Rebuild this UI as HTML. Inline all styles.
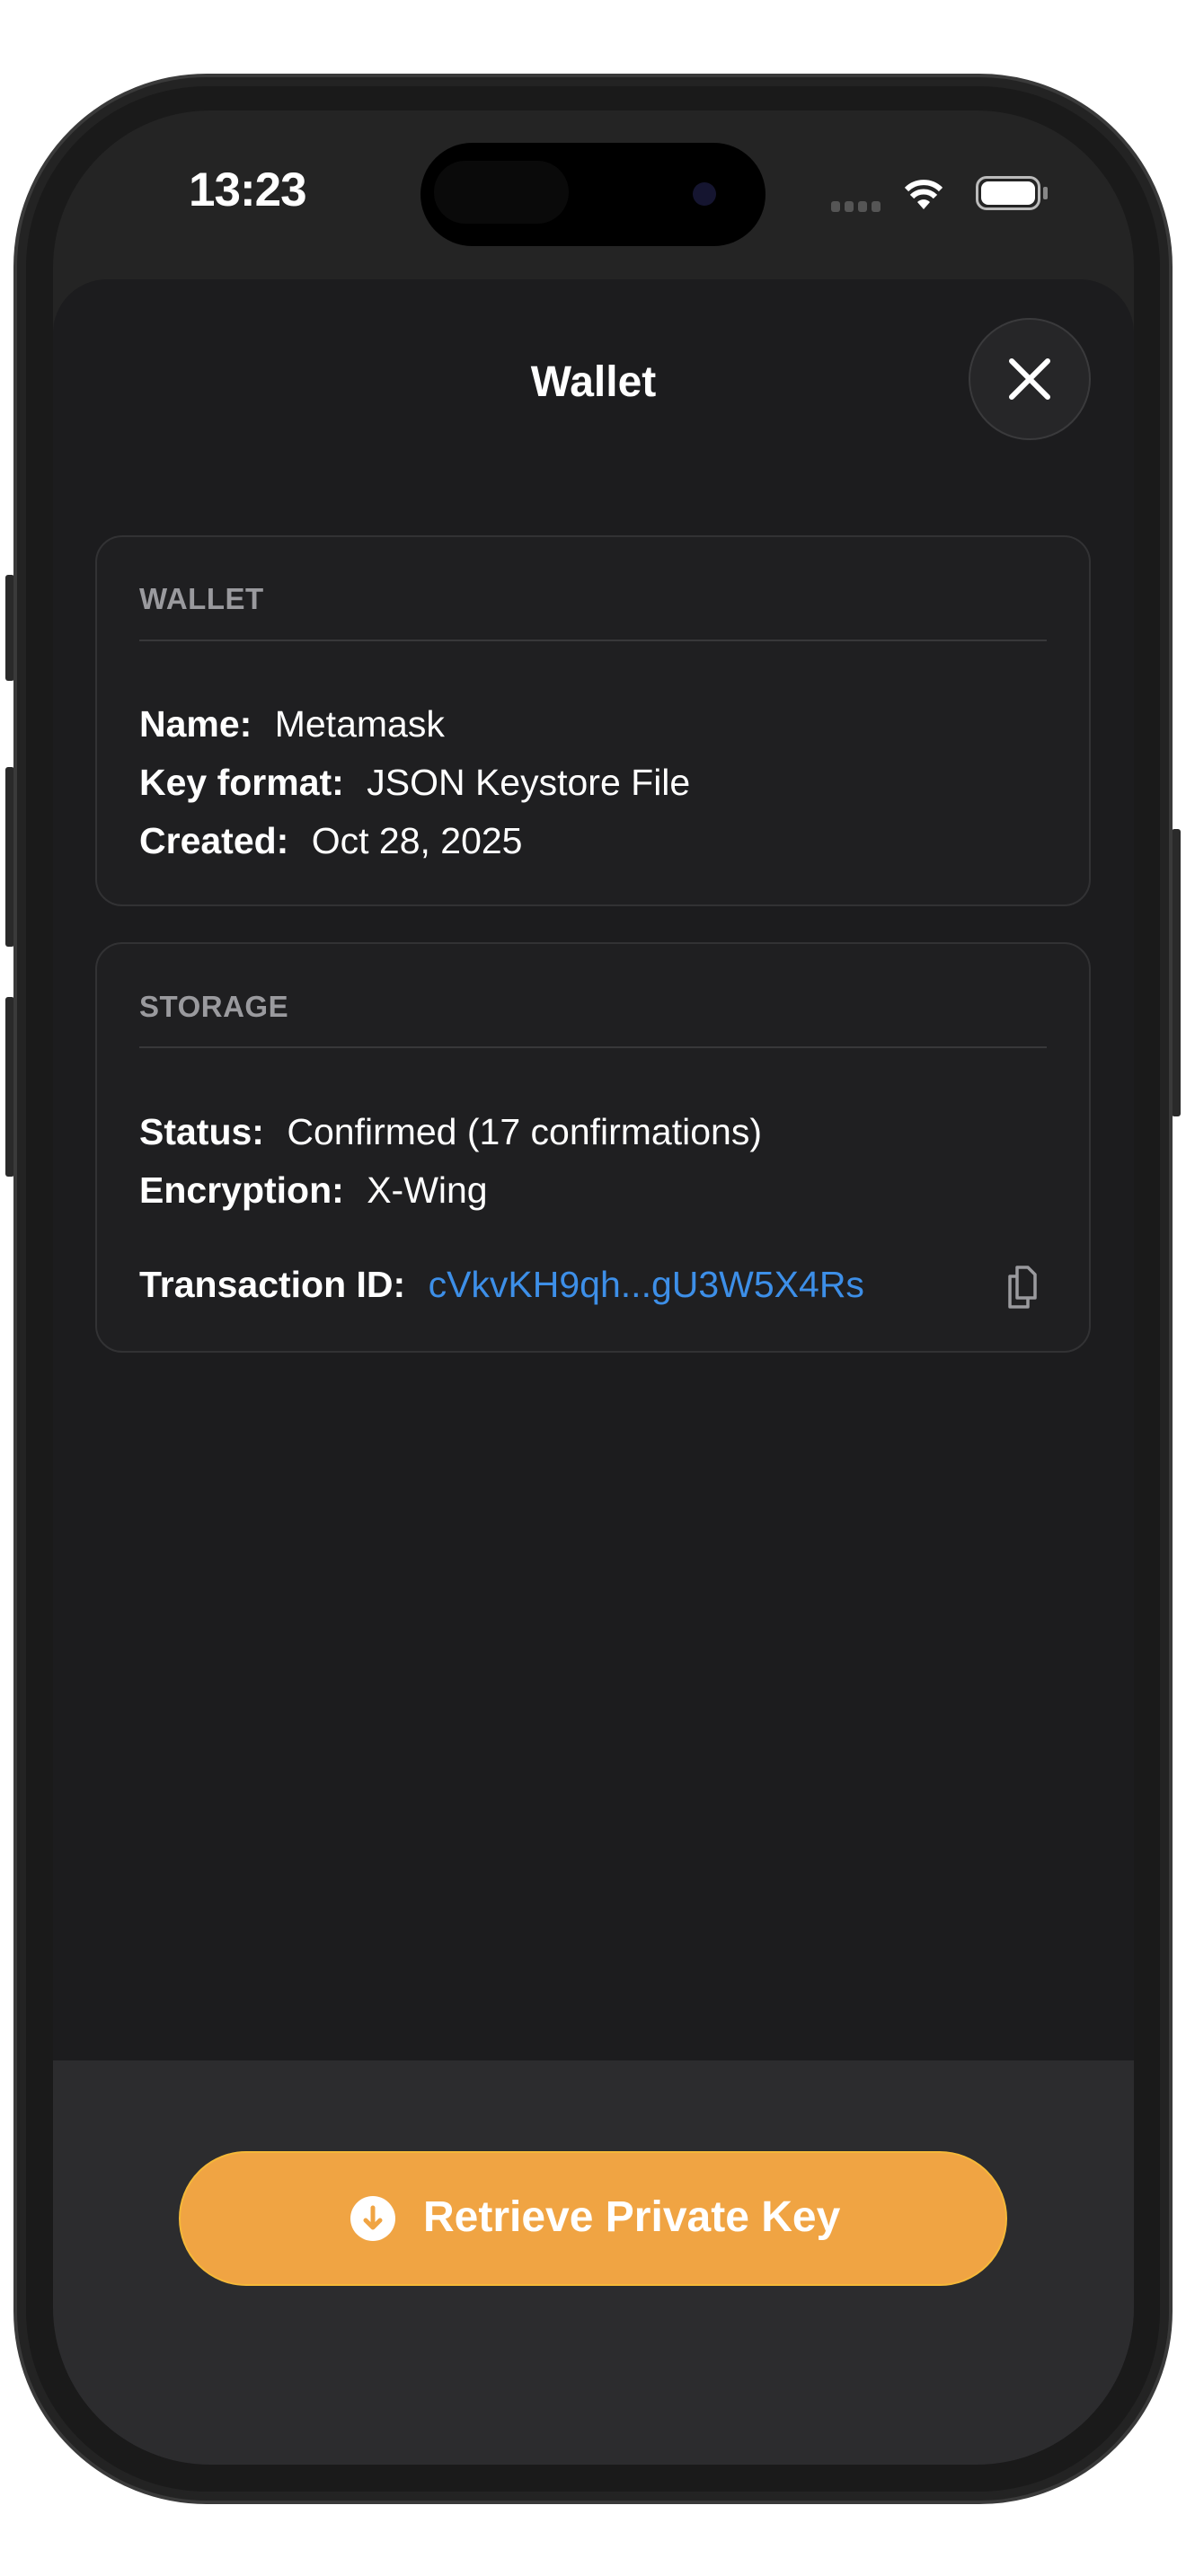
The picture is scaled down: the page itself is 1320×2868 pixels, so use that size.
<!DOCTYPE html>
<html><head><meta charset="utf-8"><style>
*{margin:0;padding:0;box-sizing:border-box}
html,body{width:1320px;height:2868px;background:#fff;overflow:hidden;font-family:"Liberation Sans",sans-serif}
.abs{position:absolute}
.phone{left:15px;top:82px;width:1290px;height:2706px;border-radius:215px;background:#1a1a1a;border:4px solid #3a3a3a;box-shadow:inset 0 0 0 10px #232323}
.screen{left:59px;top:123px;width:1203px;height:2621px;border-radius:175px;background:#242424;overflow:hidden}
.sheet{left:0;top:188px;width:1203px;height:2433px;background:#1c1c1e;border-radius:60px 60px 0 0}
.bottom{left:0;top:2171px;width:1203px;height:450px;background:#2c2c2e}
.card{background:#1f1f21;border:2px solid #323234;border-radius:30px}
.lbl{color:#9a9a9e;font-weight:bold;font-size:33px;letter-spacing:0.5px}
.div{height:2px;background:#38383a}
.row{color:#fff;font-size:41px;white-space:nowrap;line-height:46px}
.row b{font-weight:bold;margin-right:14px}
.side{background:#2a2a2a;border-radius:3px}
</style></head><body>
<div class="abs side" style="left:6px;top:640px;width:10px;height:118px"></div>
<div class="abs side" style="left:6px;top:854px;width:10px;height:200px"></div>
<div class="abs side" style="left:6px;top:1110px;width:10px;height:200px"></div>
<div class="abs side" style="left:1304px;top:923px;width:10px;height:320px"></div>
<div class="abs phone"></div>
<div class="abs screen">
  <div class="abs" style="left:151px;top:58px;color:#fff;font-size:53px;font-weight:bold;letter-spacing:-1px">13:23</div>
  <div class="abs" style="left:409px;top:36px;width:384px;height:115px;background:#000;border-radius:58px"></div>
  <div class="abs" style="left:424px;top:56px;width:150px;height:70px;background:#0a0a0a;border-radius:35px"></div>
  <div class="abs" style="left:712px;top:80px;width:26px;height:26px;background:#151530;border-radius:50%"></div>
  <div class="abs" style="left:866px;top:101px;width:60px;height:12px;display:flex;gap:5px"><span style="width:10px;height:12px;background:#555;border-radius:3px"></span><span style="width:10px;height:12px;background:#555;border-radius:3px"></span><span style="width:10px;height:12px;background:#555;border-radius:3px"></span><span style="width:10px;height:12px;background:#555;border-radius:3px"></span></div>
  <svg class="abs" style="left:947px;top:72px" width="44" height="40" viewBox="0 0 44 40"><path d="M22 38 L15 30 A10 10 0 0 1 29 30 Z" fill="#fff"/><path d="M9 24 A18 18 0 0 1 35 24" stroke="#fff" stroke-width="6" fill="none"/><path d="M3 16 A27 27 0 0 1 41 16" stroke="#fff" stroke-width="6" fill="none"/></svg>
  <div class="abs" style="left:1027px;top:73px;width:72px;height:38px;border:3px solid #bbb;border-radius:12px;padding:3px"><div style="width:100%;height:100%;background:#fff;border-radius:8px"></div></div>
  <div class="abs" style="left:1102px;top:85px;width:5px;height:14px;background:#888;border-radius:2px"></div>

  <div class="abs sheet"></div>
  <div class="abs bottom"></div>
  <div class="abs" style="left:0;top:275px;width:1203px;text-align:center;color:#fff;font-size:48px;font-weight:bold">Wallet</div>
  <div class="abs" style="left:1019px;top:231px;width:136px;height:136px;border-radius:50%;background:#262628;border:2px solid #3a3a3c"></div>
  <svg class="abs" style="left:1059px;top:271px" width="56" height="56" viewBox="0 0 56 56"><path d="M8 8 L48 48 M48 8 L8 48" stroke="#fff" stroke-width="6" stroke-linecap="round"/></svg>

  <div class="abs card" style="left:47px;top:473px;width:1108px;height:413px"></div>
  <div class="abs lbl" style="left:96px;top:525px">WALLET</div>
  <div class="abs div" style="left:96px;top:589px;width:1010px"></div>
  <div class="abs row" style="left:96px;top:660px"><b>Name:</b> Metamask</div>
  <div class="abs row" style="left:96px;top:725px"><b>Key format:</b> JSON Keystore File</div>
  <div class="abs row" style="left:96px;top:790px"><b>Created:</b> Oct 28, 2025</div>

  <div class="abs card" style="left:47px;top:926px;width:1108px;height:457px"></div>
  <div class="abs lbl" style="left:96px;top:979px">STORAGE</div>
  <div class="abs div" style="left:96px;top:1042px;width:1010px"></div>
  <div class="abs row" style="left:96px;top:1114px"><b>Status:</b> Confirmed (17 confirmations)</div>
  <div class="abs row" style="left:96px;top:1179px"><b>Encryption:</b> X-Wing</div>
  <div class="abs row" style="left:96px;top:1284px"><b>Transaction ID:</b> <span style="color:#3d8fe8">cVkvKH9qh...gU3W5X4Rs</span></div>
  <svg class="abs" style="left:1059px;top:1282px" width="40" height="54" viewBox="0 0 40 54"><path d="M14 6 H26 L34 14 V40 H14 Z" stroke="#9a9a9e" stroke-width="3.5" fill="none" stroke-linejoin="round"/><path d="M14 16 H6 V50 H26 V40" stroke="#9a9a9e" stroke-width="3.5" fill="none" stroke-linejoin="round"/></svg>

  <div class="abs" style="left:140px;top:2272px;width:922px;height:150px;border-radius:75px;background:#f0a443;border:2px solid #f5b838"></div>
  <div class="abs" style="left:331px;top:2322px;width:50px;height:50px;border-radius:50%;background:#fff"></div>
  <svg class="abs" style="left:331px;top:2322px" width="50" height="50" viewBox="0 0 50 50"><path d="M25 13 V34 M17 27 L25 35 L33 27" stroke="#f0a443" stroke-width="5" fill="none" stroke-linecap="round" stroke-linejoin="round"/></svg>
  <div class="abs" style="left:412px;top:2318px;color:#fff;font-size:48px;font-weight:bold;white-space:nowrap">Retrieve Private Key</div>
</div>
</body></html>
